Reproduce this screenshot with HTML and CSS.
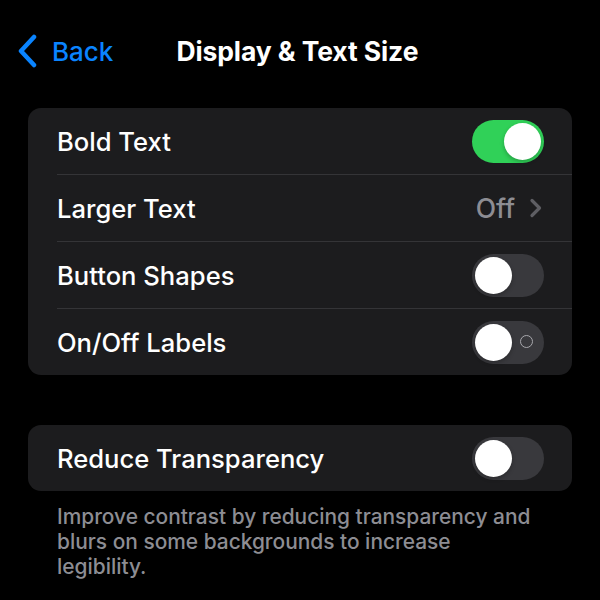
FILE: index.html
```html
<!DOCTYPE html>
<html lang="en">
<head>
  <meta charset="UTF-8">
  <title>Display &amp; Text Size</title>
  <link rel="stylesheet" href="styles.css">
</head>
<body>
  <div class="nav">
    <a class="back" href="#">
      <svg class="chevron" width="22" height="34" viewBox="0 0 22 34">
        <path d="M17 3 L4 17 L17 31" fill="none" stroke="#0a84ff" stroke-width="4.5" stroke-linecap="round" stroke-linejoin="round"/>
      </svg>
      <span>Back</span>
    </a>
    <h1 class="title">Display &amp; Text Size</h1>
  </div>

  <div class="group">
    <div class="row">
      <span class="label">Bold Text</span>
      <div class="toggle on"><div class="knob"></div></div>
    </div>
    <div class="row">
      <span class="label">Larger Text</span>
      <span class="detail">Off
        <svg width="14" height="22" viewBox="0 0 14 22">
          <path d="M3 3.5 L10.5 11 L3 18.5" fill="none" stroke="#5e5e63" stroke-width="3.2" stroke-linecap="round" stroke-linejoin="round"/>
        </svg>
      </span>
    </div>
    <div class="row">
      <span class="label">Button Shapes</span>
      <div class="toggle"><div class="knob"></div></div>
    </div>
    <div class="row">
      <span class="label">On/Off Labels</span>
      <div class="toggle"><div class="knob"></div><span class="ring"></span></div>
    </div>
  </div>

  <div class="group second">
    <div class="row">
      <span class="label">Reduce Transparency</span>
      <div class="toggle"><div class="knob"></div></div>
    </div>
  </div>
  <p class="footer">Improve contrast by reducing transparency and blurs on some backgrounds to increase legibility.</p>
</body>
</html>
```

FILE: styles.css
```css
body {
  margin: 0;
  background-color: #000;
  color: #fff;
  font-family: Inter, "Noto Sans", sans-serif;
  width: 600px;
  height: 600px;
  overflow: hidden;
}
.nav {
  display: flex;
  align-items: center;
  height: 52px;
  margin-top: 25px;
  padding-left: 17px;
}
.back {
  display: flex;
  align-items: center;
  gap: 13px;
  color: #0a84ff;
  text-decoration: none;
  font-size: 26px;
  font-weight: 500;
}
.title {
  margin: 0 0 0 63px;
  font-size: 26.5px;
  font-weight: 700;
  letter-spacing: -0.1px;
}
.group {
  margin: 31px 28px 0;
  background-color: #1c1c1e;
  border-radius: 13px;
}
.group.second {
  margin-top: 50px;
}
.row {
  display: flex;
  align-items: center;
  justify-content: space-between;
  height: 67px;
  margin-left: 29px;
  padding-right: 28px;
  border-bottom: 1px solid #343437;
  box-sizing: border-box;
}
.row:last-child {
  border-bottom: none;
  height: 66px;
}
.label {
  font-size: 25.6px;
  font-weight: 500;
}
.detail {
  display: flex;
  align-items: center;
  gap: 14px;
  color: #8d8d93;
  font-size: 26.5px;
  font-weight: 500;
  margin-right: 1px;
}
.toggle {
  position: relative;
  width: 72px;
  height: 43px;
  border-radius: 22px;
  background-color: #39393d;
}
.toggle.on {
  background-color: #30d158;
}
.knob {
  position: absolute;
  top: 3px;
  left: 3px;
  width: 37px;
  height: 37px;
  border-radius: 50%;
  background-color: #fff;
  box-shadow: 0 2px 4px rgba(0, 0, 0, 0.25);
}
.toggle.on .knob {
  left: 32px;
}
.ring {
  position: absolute;
  top: 14px;
  left: 48px;
  width: 11px;
  height: 11px;
  border: 1.8px solid #a8a8ad;
  border-radius: 50%;
}
.footer {
  margin: 13px 0 0 57px;
  width: 485px;
  color: #8d8d93;
  font-size: 20.9px;
  line-height: 25px;
  font-weight: 500;
}
```
